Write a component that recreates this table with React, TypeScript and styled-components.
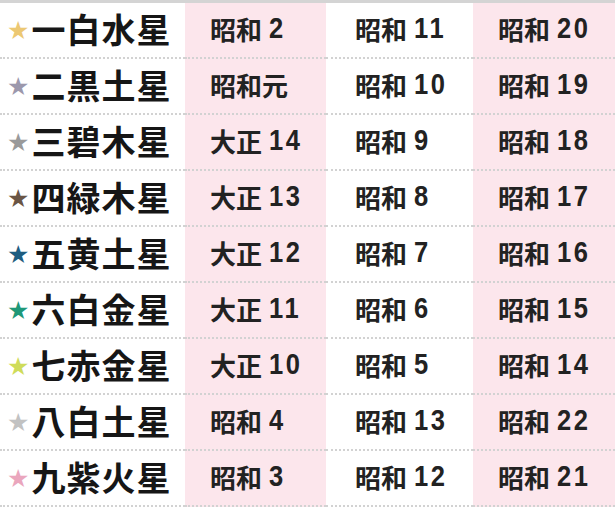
import styled, { createGlobalStyle } from 'styled-components';

const GlobalStyle = createGlobalStyle`
  html, body {
    margin: 0;
    padding: 0;
    background: #ffffff;
  }
  body {
    font-family: "Noto Sans CJK JP", "Noto Sans", sans-serif;
    color: #1a1a1a;
  }
`;

const Table = styled.div`
  width: 615px;
  height: 507px;
  border-top: 3px solid #d4d4d4;
  box-sizing: border-box;
  display: grid;
  grid-template-columns: 185px 141px 147px 142px;
  grid-template-rows: repeat(9, 1fr);
  overflow: hidden;
`;

const NameCell = styled.div`
  display: flex;
  align-items: center;
  gap: 1px;
  padding-left: 7px;
  padding-bottom: 4px;
  border-bottom: 2px dotted #d2d2d2;
  font-size: 34px;
  font-weight: 700;
  letter-spacing: 1px;
  color: #161616;
`;

const Star = styled.span<{ $color: string }>`
  color: ${(p) => p.$color};
  font-size: 25px;
  line-height: 1;
  font-family: "DejaVu Sans", sans-serif;
  margin-top: 4px;
`;

const YearCell = styled.div<{ $pink: boolean }>`
  display: flex;
  align-items: center;
  padding-left: ${(p) => (p.$pink ? 25 : 29)}px;
  padding-bottom: 4px;
  background: ${(p) => (p.$pink ? '#fce6ec' : '#ffffff')};
  border-bottom: 2px dotted #d2d2d2;
  font-size: 26px;
  font-weight: 700;
  color: #222222;
`;

const Num = styled.span`
  display: inline-block;
  font-family: "Liberation Sans", sans-serif;
  font-weight: 700;
  font-size: 29px;
  margin-left: 7px;
  letter-spacing: 3px;
  transform: scaleX(0.88);
  transform-origin: left center;
`;

type Row = { name: string; star: string; years: [string, string, string] };

const rows: Row[] = [
  { name: '一白水星', star: '#ecc873', years: ['昭和|2', '昭和|11', '昭和|20'] },
  { name: '二黒土星', star: '#9c98ac', years: ['昭和元|', '昭和|10', '昭和|19'] },
  { name: '三碧木星', star: '#9a9a9a', years: ['大正|14', '昭和|9', '昭和|18'] },
  { name: '四緑木星', star: '#6a5545', years: ['大正|13', '昭和|8', '昭和|17'] },
  { name: '五黄土星', star: '#1f5d80', years: ['大正|12', '昭和|7', '昭和|16'] },
  { name: '六白金星', star: '#1f9878', years: ['大正|11', '昭和|6', '昭和|15'] },
  { name: '七赤金星', star: '#cfdc5a', years: ['大正|10', '昭和|5', '昭和|14'] },
  { name: '八白土星', star: '#c2c2c2', years: ['昭和|4', '昭和|13', '昭和|22'] },
  { name: '九紫火星', star: '#eaa6bd', years: ['昭和|3', '昭和|12', '昭和|21'] },
];

const App = () => (
  <>
    <GlobalStyle />
    <Table>
      {rows.map((row) => (
        <>
          <NameCell key={row.name}>
            <Star $color={row.star}>★</Star>
            {row.name}
          </NameCell>
          {row.years.map((y, i) => {
            const [era, num] = y.split('|');
            return (
              <YearCell key={`${row.name}-${i}`} $pink={i !== 1}>
                {era}
                {num && <Num>{num}</Num>}
              </YearCell>
            );
          })}
        </>
      ))}
    </Table>
  </>
);

export default App;
